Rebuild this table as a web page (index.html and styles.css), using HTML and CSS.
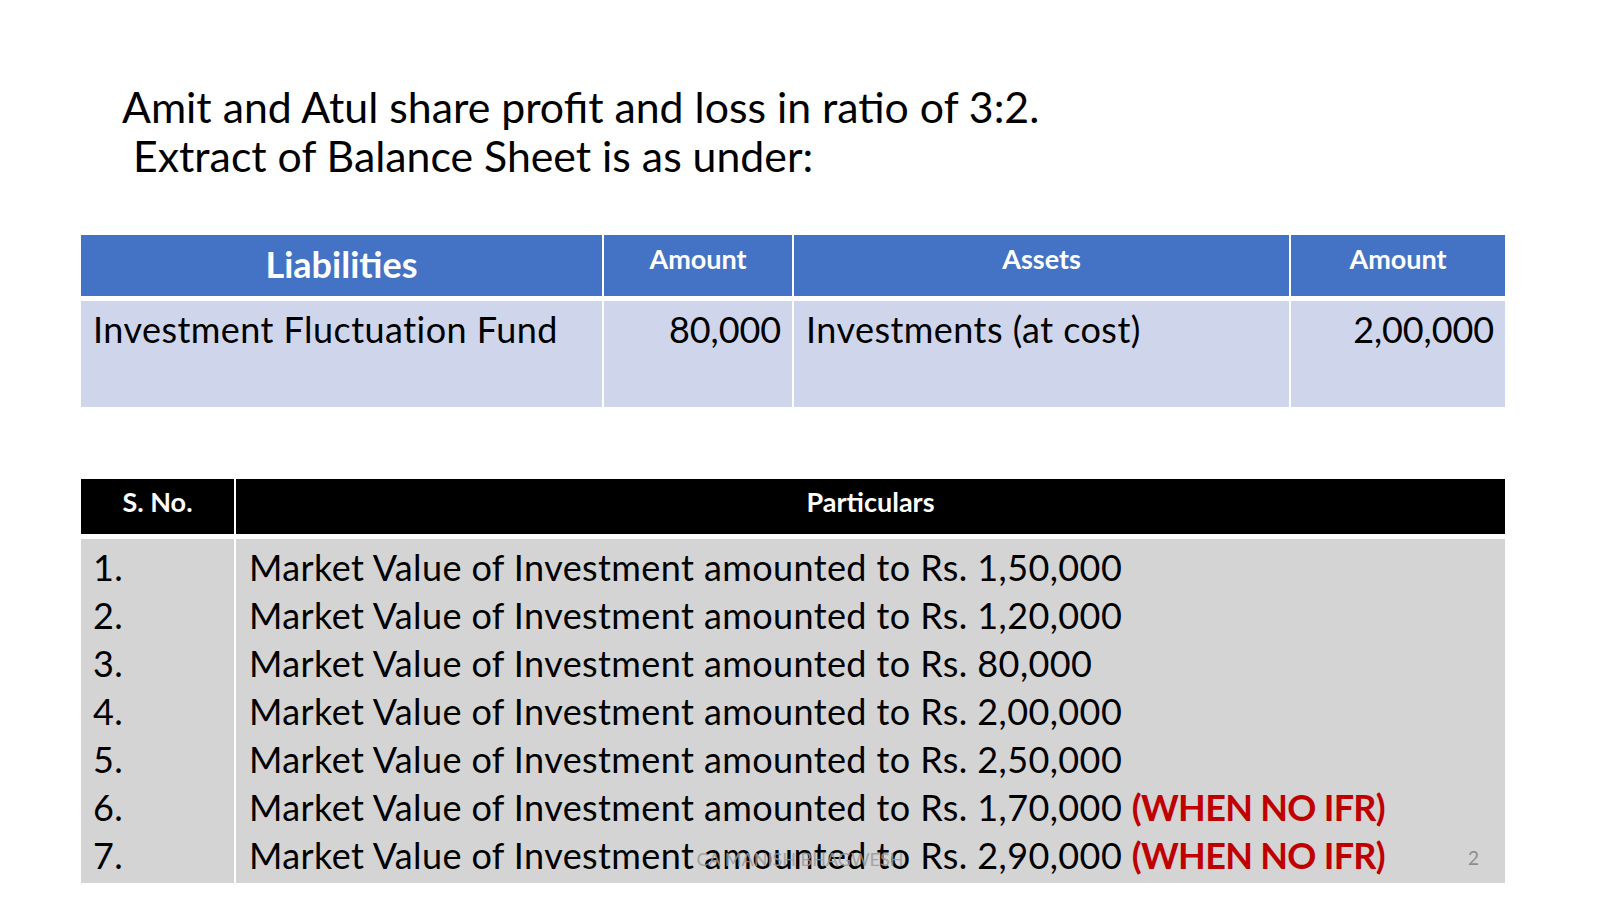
FILE: index.html
```html
<!DOCTYPE html>
<html>
<head>
<meta charset="utf-8">
<title>Balance Sheet Extract</title>
<link rel="stylesheet" href="styles.css">
</head>
<body>
<div class="slide">
  <div class="title">
    <div class="title-line">Amit and Atul share profit and loss in ratio of 3:2.</div>
    <div class="title-line indent">Extract of Balance Sheet is as under:</div>
  </div>

  <div class="bs">
    <div class="bs-head big">Liabilities</div>
    <div class="bs-head">Amount</div>
    <div class="bs-head">Assets</div>
    <div class="bs-head">Amount</div>
    <div class="bs-cell">Investment Fluctuation Fund</div>
    <div class="bs-cell num">80,000</div>
    <div class="bs-cell">Investments (at cost)</div>
    <div class="bs-cell num">2,00,000</div>
  </div>

  <div class="list">
    <div class="list-head">S. No.</div>
    <div class="list-head">Particulars</div>
    <div class="list-cell">
      <div class="line">1.</div>
      <div class="line">2.</div>
      <div class="line">3.</div>
      <div class="line">4.</div>
      <div class="line">5.</div>
      <div class="line">6.</div>
      <div class="line">7.</div>
    </div>
    <div class="list-cell wide">
      <div class="line">Market Value of Investment amounted to Rs. 1,50,000</div>
      <div class="line">Market Value of Investment amounted to Rs. 1,20,000</div>
      <div class="line">Market Value of Investment amounted to Rs. 80,000</div>
      <div class="line">Market Value of Investment amounted to Rs. 2,00,000</div>
      <div class="line">Market Value of Investment amounted to Rs. 2,50,000</div>
      <div class="line">Market Value of Investment amounted to Rs. 1,70,000 <span class="red">(WHEN NO IFR)</span></div>
      <div class="line">Market Value of Investment amounted to Rs. 2,90,000 <span class="red">(WHEN NO IFR)</span></div>
    </div>
  </div>

  <div class="footer">CA MANISH BHAGWESH</div>
  <div class="slide-num">2</div>
</div>
</body>
</html>
```

FILE: styles.css
```css
* { box-sizing: border-box; }

html, body {
  margin: 0;
  padding: 0;
  background: #ffffff;
}

.slide {
  position: relative;
  width: 1600px;
  height: 900px;
  overflow: hidden;
  background: #ffffff;
  font-family: Lato, "Open Sans", sans-serif;
  color: #000000;
}

.title {
  padding: 82px 0 0 122px;
  font-size: 42.8px;
  line-height: 49px;
}

.title-line { white-space: nowrap; }
.title-line.indent { padding-left: 11px; }

/* Balance sheet table */
.bs {
  display: grid;
  grid-template-columns: 521px 188px 495px 214px;
  grid-template-rows: 61px 106px;
  column-gap: 2px;
  row-gap: 5px;
  width: 1424px;
  margin: 55px 0 0 81px;
}

.bs-head {
  background: #4472c4;
  color: #ffffff;
  font-weight: 700;
  font-size: 27px;
  line-height: 32px;
  text-align: center;
  padding-top: 8px;
}

.bs-head.big {
  font-size: 36px;
  line-height: 43px;
  padding-top: 8px;
}

.bs-cell {
  background: #cfd5ea;
  font-size: 36px;
  line-height: 44px;
  letter-spacing: 0.45px;
  padding: 6px 12px 0 12px;
  white-space: nowrap;
}

.bs-cell.num {
  text-align: right;
  padding-right: 11px;
  letter-spacing: -0.1px;
}

/* Particulars table */
.list {
  display: grid;
  grid-template-columns: 153px 1269px;
  grid-template-rows: 55px 344px;
  column-gap: 2px;
  row-gap: 5px;
  width: 1424px;
  margin: 72px 0 0 81px;
}

.list-head {
  background: #000000;
  color: #ffffff;
  font-weight: 700;
  font-size: 27px;
  line-height: 32px;
  text-align: center;
  padding-top: 7px;
}

.list-cell {
  background: #d4d4d4;
  font-size: 36px;
  line-height: 48px;
  letter-spacing: 0.4px;
  padding: 4px 12px 0 12px;
}

.list-cell.wide { padding-left: 13px; }

.line { white-space: nowrap; }

.red {
  color: #c00000;
  font-weight: 700;
  letter-spacing: -0.7px;
}

.footer {
  position: absolute;
  left: 0;
  right: 0;
  top: 848px;
  text-align: center;
  font-size: 18px;
  line-height: 22px;
  color: #9a9a9a;
  opacity: 0.85;
}

.slide-num {
  position: absolute;
  left: 1468px;
  top: 847px;
  font-size: 19px;
  line-height: 22px;
  color: #8c8c8c;
}
```
